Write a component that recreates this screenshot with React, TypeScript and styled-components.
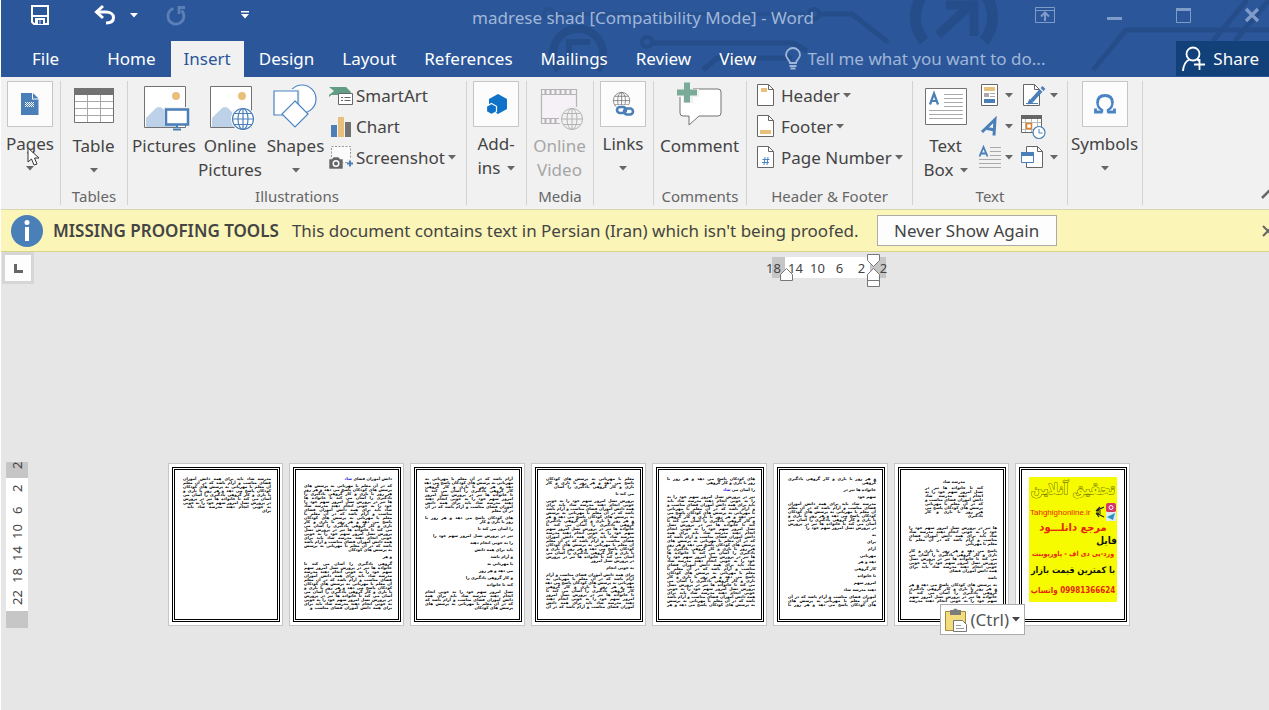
import React from "react";
import styled, { createGlobalStyle, css } from "styled-components";

const GlobalStyle = createGlobalStyle`
  * { box-sizing: border-box; }
  body {
    margin: 0;
    background: #e6e6e6;
    font-family: "Noto Sans", "Liberation Sans", sans-serif;
    color: #444;
  }
  button, input {
    font: inherit;
    color: inherit;
    background: none;
    border: 0;
    padding: 0;
    margin: 0;
  }
  svg { display: block; flex: none; overflow: visible; }
`;

const Window = styled.div`
  display: flex;
  flex-direction: column;
  min-height: 100vh;
  border-left: 1px solid #fff;
  overflow-x: hidden;
`;

/* ---------- title bar and tabs ---------- */

const Header = styled.header`
  position: relative;
  background: #2b579a;
  color: #fff;
`;

const Circuit = styled.svg`
  position: absolute;
  top: 0;
  right: 0;
  overflow: hidden;
`;

const TitleBar = styled.div`
  position: relative;
  display: flex;
  height: 41px;
  align-items: flex-start;
`;

const QuickAccess = styled.div`
  display: flex;
  width: 260px;
  padding: 4px 0 0 29px;
`;

const QuickButton = styled.button<{ $after: number }>`
  display: flex;
  align-items: center;
  height: 22px;
  margin-right: ${(p) => p.$after}px;
`;

const Title = styled.h1`
  flex: 1;
  margin: 0;
  padding-top: 6px;
  font-size: 17px;
  line-height: 24px;
  font-weight: 400;
  text-align: center;
  white-space: nowrap;
  color: #a0b6d8;
`;

const WindowControls = styled.div`
  display: flex;
  gap: 49px;
  padding: 4px 7px 0 10px;
`;

const ControlButton = styled.button`
  display: flex;
  align-items: center;
  justify-content: center;
  width: 20px;
  height: 22px;
`;

const TabRow = styled.nav`
  position: relative;
  display: flex;
  gap: 2px;
  height: 36px;
`;

const Tab = styled.button<{ $active?: boolean; $file?: boolean }>`
  padding: 0 ${(p) => (p.$file ? 31 : 13)}px;
  margin-right: ${(p) => (p.$file ? 2 : 0)}px;
  font-size: 17px;
  line-height: 36px;
  white-space: nowrap;
  ${(p) =>
    p.$active &&
    css`
      background: #f1f1f1;
      color: #2b579a;
    `}
`;

const TellMe = styled.label`
  display: flex;
  flex: 1;
  align-items: center;
  gap: 6px;
  padding-left: 14px;
`;

const TellMeInput = styled.input`
  width: 260px;
  font-size: 17px;
  line-height: 24px;
  outline: none;
  &::placeholder {
    color: #a0b6d8;
    opacity: 1;
  }
`;

const ShareButton = styled.button`
  display: flex;
  align-items: center;
  gap: 8px;
  height: 35px;
  padding: 0 10px 0 6px;
  background: #124078;
  font-size: 17px;
`;

/* ---------- ribbon ---------- */

const Ribbon = styled.div`
  position: relative;
  display: flex;
  height: 132px;
  padding: 4px 0;
  background: #f1f1f1;
`;

const Group = styled.section<{ $width: number }>`
  display: flex;
  flex: none;
  flex-direction: column;
  width: ${(p) => p.$width}px;
  border-right: 1px solid #d2d2d2;
`;

const GroupBody = styled.div<{ $pad?: number }>`
  display: flex;
  flex: 1;
  padding-left: ${(p) => p.$pad ?? 0}px;
`;

const GroupLabel = styled.div`
  height: 18px;
  font-size: 15px;
  line-height: 18px;
  text-align: center;
  white-space: nowrap;
  color: #666;
`;

const BigButton = styled.button<{ $width?: number; $muted?: boolean }>`
  display: flex;
  flex-direction: column;
  align-items: center;
  width: ${(p) => (p.$width ? p.$width + "px" : "100%")};
  padding-right: 1px;
  font-size: 17px;
  line-height: 24px;
  color: ${(p) => (p.$muted ? "#a6a6a6" : "#444")};
`;

const IconArea = styled.span<{ $boxed?: boolean }>`
  display: flex;
  justify-content: center;
  width: 46px;
  height: 46px;
  margin-bottom: ${(p) => (p.$boxed ? 5 : 7)}px;
  ${(p) =>
    p.$boxed &&
    css`
      align-items: center;
      background: #fcfcfc;
      border: 1px solid #c6c6c6;
    `}
`;

const Line = styled.span`
  display: flex;
  align-items: center;
  justify-content: center;
  gap: 6px;
  height: 24px;
  white-space: nowrap;
`;

const SmallColumn = styled.div<{ $pad?: number }>`
  display: flex;
  flex-direction: column;
  padding-left: ${(p) => p.$pad ?? 0}px;
`;

const SmallButton = styled.button<{ $gap?: number }>`
  display: flex;
  align-items: center;
  gap: 3px;
  height: 31px;
  padding-bottom: 2px;
  font-size: 17px;
  white-space: nowrap;
  & > svg:first-child { margin-right: ${(p) => p.$gap ?? 0}px; }
`;

const CollapseButton = styled.button`
  display: flex;
  align-items: flex-end;
  margin-left: auto;
  overflow: hidden;
`;

const Pointer = styled.svg`
  position: absolute;
  left: 26px;
  top: 70px;
`;

/* ---------- message bar ---------- */

const MessageBar = styled.div`
  display: flex;
  align-items: center;
  height: 43px;
  padding-left: 10px;
  font-size: 17px;
  white-space: nowrap;
  background: #fbf5b7;
  border-top: 1px solid #d8d6b0;
  border-bottom: 1px solid #d8d48a;
`;

const MessageTitle = styled.strong`
  margin: 0 13px 0 10px;
  font-weight: 600;
`;

const MessageButton = styled.button`
  height: 31px;
  width: 180px;
  margin-left: 18px;
  background: #fdfdfd;
  border: 1px solid #ababab;
`;

const CloseButton = styled.button`
  margin-left: auto;
  overflow: hidden;
`;

/* ---------- document area ---------- */

const Workspace = styled.main`
  display: grid;
  grid-template-columns: 33px 1fr;
  grid-template-rows: 34px 1fr;
  flex: 1;
`;

const TabSelector = styled.button`
  display: flex;
  align-items: center;
  justify-content: center;
  width: 32px;
  height: 32px;
  margin: 0 1px;
  background: #fdfdfd;
  border: 3px solid #d6d6d6;
`;

const TopRulerRow = styled.div`
  display: flex;
  justify-content: center;
  padding: 5px 5px 0 359px;
`;

const TopRuler = styled.div`
  position: relative;
  display: flex;
  height: 21px;
  font-size: 13px;
  line-height: 22px;
  background: linear-gradient(
    90deg,
    transparent 9px, #c6c6c6 9px 22px, #fff 22px 107px, #c6c6c6 107px 123px, transparent 123px
  );
`;

const TopMark = styled.span`
  width: 22px;
  text-align: center;
`;

const Indents = styled.svg`
  position: absolute;
  left: 0;
  top: -4px;
`;

const SideRuler = styled.div`
  align-self: start;
  display: flex;
  flex-direction: column;
  width: 22px;
  height: 166px;
  margin: 176px 0 0 5px;
  font-size: 13px;
  line-height: 22px;
  background: linear-gradient(#c6c6c6 16px, #fff 16px 149px, #c6c6c6 149px);
`;

const SideMark = styled.span<{ $first?: boolean }>`
  height: ${(p) => (p.$first ? 15 : 22)}px;
  writing-mode: vertical-rl;
  transform: rotate(180deg);
  text-align: ${(p) => (p.$first ? "right" : "center")};
`;

const Pages = styled.div`
  position: relative;
  display: flex;
  justify-content: center;
  align-items: flex-start;
  gap: 6px;
  padding: 177px 5px 0 0;
`;

const Sheet = styled.article`
  flex: none;
  width: 115px;
  height: 163px;
  padding: 3px 2px 3px 3px;
  background: #fff;
  border: 1px solid #c6c6c6;
`;

const Frame = styled.div`
  display: flex;
  flex-direction: column;
  height: 155px;
  padding: 7px 6px 0 7px;
  border: 3px double #000;
`;

const TextLine = styled.div<{ $width: number; $gap: number; $inset: number }>`
  width: ${(p) => p.$width}px;
  margin: ${(p) => p.$gap}px ${(p) => p.$inset}px 0 auto;
  direction: rtl;
  font-family: "DejaVu Sans", sans-serif;
  font-weight: 700;
  font-size: 4px;
  line-height: 4px;
  white-space: nowrap;
  text-align: justify;
  text-align-last: ${(p) => (p.$width > 56 ? "justify" : "start")};
  color: #000;
`;

const Heading = styled.b`
  color: #2a10d8;
`;

const Poster = styled.div`
  display: flex;
  flex-direction: column;
  width: 88px;
  height: 125px;
  direction: rtl;
  background: #f7fb00;
  font-family: "DejaVu Sans Condensed", "DejaVu Sans", sans-serif;
  font-weight: 700;
  white-space: nowrap;
  text-align: center;
`;

const PosterLine = styled.div<{ $size: number; $height: number; $color?: string; $align?: string }>`
  font-size: ${(p) => p.$size}px;
  height: ${(p) => p.$height}px;
  line-height: ${(p) => p.$height}px;
  color: ${(p) => p.$color ?? "#e8260c"};
  text-align: ${(p) => p.$align ?? "center"};
`;

const PosterTitle = styled(PosterLine)`
  color: #f7fb00;
  -webkit-text-stroke: 1px #6f7400;
  paint-order: stroke fill;
`;

const PosterSite = styled.div`
  display: flex;
  align-items: center;
  justify-content: space-between;
  height: 20px;
  padding: 0 1px;
  direction: ltr;
  color: #e8260c;
  font-family: "Liberation Sans", sans-serif;
  font-weight: 400;
  font-size: 8px;
`;

const PasteOptions = styled.button`
  position: absolute;
  left: 50%;
  top: 318px;
  display: flex;
  align-items: center;
  gap: 3px;
  width: 85px;
  height: 31px;
  margin-left: 288px;
  padding-left: 4px;
  background: #fff;
  border: 1px solid #ababab;
  font-size: 17px;
  color: #555;
`;

/* ---------- icons ---------- */

const Caret = ({ color = "#666" }: { color?: string }) => (
  <svg width="8" height="5" viewBox="0 0 8 5"><path d="M0 0h8L4 4.5z" fill={color} /></svg>
);

const SaveIcon = () => (
  <svg width="20" height="20" viewBox="0 0 20 20" fill="none" stroke="#fff" strokeWidth="2">
    <path d="M2 1h16v18H4l-2-2zM2 11h16" />
    <path d="M5 13h10v7H5z" fill="#fff" stroke="none" />
    <path d="M8 15h1.6v4H8zM10.4 15H13v4h-2.6z" fill="#2b579a" stroke="none" />
  </svg>
);
const UndoIcon = () => (
  <svg width="22" height="20" viewBox="0 0 22 20" fill="none" stroke="#fff" strokeWidth="3">
    <path d="M2 7h10c4 0 7.500 2 7.500 5.500S17 18 12 18" /><path d="M9 1L2.500 7 9 13" />
  </svg>
);
const RedoIcon = () => (
  <svg width="20" height="20" viewBox="1 0 20 20" fill="none" stroke="#5c7fb6" strokeWidth="2.800">
    <path d="M7.500 3.500A8 8 0 1 0 15.500 5.500" /><path d="M13 9V2.500H19" />
  </svg>
);
const CustomizeIcon = () => (
  <svg width="8" height="8" viewBox="0 0 8 8" fill="#fff"><path d="M0 0h8v1.500H0zM0 3h8L4 7.500z" /></svg>
);
const RibbonOptionsIcon = () => (
  <svg width="20" height="16" viewBox="0 0 20 16" fill="none" stroke="#7f9bc8">
    <path d="M.5.5h19v15H.5zM.5 3.500h19" /><path d="M10 14V6M6 9.500l4-4 4 4" strokeWidth="2" />
  </svg>
);
const MinimizeIcon = () => (
  <svg width="15" height="10" viewBox="0 0 15 10"><path d="M0 7h15v3H0z" fill="#7f9bc8" /></svg>
);
const MaximizeIcon = () => (
  <svg width="15" height="15" viewBox="0 0 15 15"><path d="M.5.5h14v14H.5z" fill="none" stroke="#7f9bc8" /><path d="M0 0h15v3H0z" fill="#7f9bc8" /></svg>
);
const CloseIcon = () => (
  <svg width="14" height="14" viewBox="0 0 14 14"><path d="M1 1l12 12M13 1L1 13" stroke="#7f9bc8" strokeWidth="3.200" /></svg>
);
const BulbIcon = () => (
  <svg width="16" height="22" viewBox="0 0 16 22" fill="none" stroke="#a0b6d8" strokeWidth="1.800">
    <path d="M5 15c0-3-4-4.500-4-8a7 7 0 0 1 14 0c0 3.500-4 5-4 8z" /><path d="M4.500 18h7M5.500 20.500h5" strokeWidth="2" />
  </svg>
);
const ShareIcon = () => (
  <svg width="23" height="25" viewBox="0 0 23 25" fill="none" stroke="#fff" strokeWidth="1.800">
    <circle cx="11" cy="8" r="6.500" /><path d="M1 25c.5-7 3-10 6.500-11.500M15 13l2 2M17.500 13v11M12 18.500h11" />
  </svg>
);

const PagesIcon = () => (
  <svg width="18" height="22" viewBox="0 0 18 22">
    <path d="M0 0h11v6.500h6.500V22H0z" fill="#4a7fb8" /><path d="M12 0l5.500 5.500H12z" fill="#4a7fb8" />
    <path d="M4 9.500h9M4 11.500h9M4 13.500h9" stroke="#fff" strokeDasharray="1 1" />
    <path d="M5 10.500h8M5 12.500h8" stroke="#fff" strokeDasharray="1 1" />
  </svg>
);
const TableIcon = () => (
  <svg width="40" height="44" viewBox="0 1 40 44">
    <path d="M.5 8.500h39v34H.5z" fill="#fff" stroke="#727272" />
    <path d="M0 8h40v7H0z" fill="#727272" />
    <path d="M13.500 15v27M26.500 15v27M1 21.500h38M1 28.500h38M1 35.500h38" stroke="#a8a8a8" />
  </svg>
);
const Photo = () => (
  <>
    <path d="M.5.5h41v41H.5z" fill="#fff" stroke="#727272" />
    <circle cx="32" cy="10" r="4" fill="#e9bf7c" />
    <path d="M2 32l10-10q3-2 6 0l14 14v5H2z" fill="#bdd1e8" />
  </>
);
const GlobeLines = () => (
  <>
    <circle cx="11" cy="11" r="10.500" /><ellipse cx="11" cy="11" rx="5" ry="10.500" />
    <path d="M11 .5v21M.5 11h21M2.500 5.500h17M2.500 16.500h17" />
  </>
);
const PicturesIcon = () => (
  <svg width="46" height="46" viewBox="-3 -5 46 46">
    <Photo />
    <path d="M20 21h26v18H20z" fill="#f1f1f1" />
    <path d="M22 23.500h22v15H22z" fill="#fff" stroke="#4a7fb8" strokeWidth="2.500" />
    <path d="M33 39v3M29 43.500h8" stroke="#4a7fb8" strokeWidth="2" />
  </svg>
);
const OnlinePicturesIcon = () => (
  <svg width="46" height="46" viewBox="-3 -5 46 46">
    <Photo />
    <g transform="translate(22 22)" fill="none" stroke="#4a7fb8" strokeWidth="1.200"><circle cx="11" cy="11" r="12" stroke="none" fill="#fff" /><GlobeLines /></g>
  </svg>
);
const ShapesIcon = () => (
  <svg width="44" height="46" viewBox="1 4 44 46" fill="#fff" stroke="#4a84c4" strokeWidth="1.200">
    <circle cx="29" cy="22" r="14" /><path d="M1 14h24v24H1z" stroke="#f1f1f1" strokeWidth="4" /><path d="M1 14h24v24H1z" />
    <path d="M22 24l13 13L22 50 9 37z" />
  </svg>
);
const SmartArtIcon = () => (
  <svg width="24" height="20" viewBox="0 0 24 20">
    <path d="M0 1h17l5 5-2 3H0l5-4z" fill="#5f9d85" /><path d="M0 11V9l6-3" fill="#5f9d85" />
    <path d="M9.500 7.500h14v11h-14z" fill="#fff" stroke="#666" />
    <path d="M12 11.500h2m1.500 0h6M12 14.500h2m1.500 0h6" stroke="#666" />
  </svg>
);
const ChartIcon = () => (
  <svg width="24" height="22" viewBox="0 0 24 22">
    <path d="M2 9h6v12H2z" fill="#4a7fb8" /><path d="M9 1h6v20H9z" fill="#e9bf7c" /><path d="M16 6h6v15h-6z" fill="#727272" />
  </svg>
);
const ScreenshotIcon = () => (
  <svg width="24" height="25" viewBox="0 0 24 25">
    <path d="M2.500 1.500h19v16h-19z" fill="#fbfbfb" stroke="#999" strokeDasharray="2 1.500" />
    <path d="M0 14h3l1.500-2h5L11 14h3v10H0z" fill="#666" stroke="#f1f1f1" strokeWidth=".6" />
    <circle cx="7" cy="18.500" r="2.800" fill="none" stroke="#fff" strokeWidth="1.400" />
    <path d="M18 14h7v9h-7z" fill="#f1f1f1" />
    <path d="M21 15.500v6M18 18.500h6" stroke="#4a7fb8" strokeWidth="2" />
  </svg>
);
const AddInsIcon = () => (
  <svg width="22" height="22" viewBox="-1 0 22 22" fill="#0f72c8">
    <path d="M12 1l9 5v10l-9 5-9-5V6z" /><path d="M5.500 10.500l5 2.800v5.400l-5 2.800-5-2.800v-5.400z" stroke="#fcfcfc" strokeWidth="1.200" />
  </svg>
);
const VideoIcon = () => (
  <svg width="44" height="46" viewBox="-2 0 44 46" fill="none" stroke="#b4b4b4">
    <path d="M1.500 8.500h35v34h-35z" fill="#f6f1f6" strokeWidth="1.200" /><path d="M1 13.500h36M1 37.500h36" />
    <path d="M5.500 9v4M10.500 9v4M15.500 9v4M20.500 9v4M25.500 9v4M30.500 9v4M5.500 38v4M10.500 38v4M15.500 38v4" strokeWidth="2" />
    <g transform="translate(21 27)"><circle cx="11" cy="11" r="13" fill="#f1f1f1" stroke="none" /><GlobeLines /></g>
  </svg>
);
const LinksIcon = () => (
  <svg width="24" height="26" viewBox="0 0 24 26" fill="none" stroke="#727272">
    <g transform="translate(2 1) scale(.78)"><GlobeLines /></g>
    <path d="M5 14h20v12H8z" fill="#fcfcfc" stroke="none" />
    <rect x="6" y="16" width="9" height="6" rx="3" stroke="#4a7fb8" strokeWidth="2.600" />
    <rect x="13" y="17.500" width="9" height="6" rx="3" stroke="#4a7fb8" strokeWidth="2.600" />
  </svg>
);
const CommentIcon = () => (
  <svg width="46" height="46" viewBox="0 0 46 46">
    <path d="M7 8h34q3 0 3 3v21q0 3-3 3H22l-10 9v-9H6q-3 0-3-3V11q0-3 4-3z" fill="#fff" stroke="#727272" />
    <path d="M6 0h10v8h6v8h-6v6H6v-6H-1V8h7z" fill="#f1f1f1" />
    <path d="M7 1.500h6v7h7v6h-7v7H7v-7H0v-6h7z" fill="#7aab98" />
  </svg>
);
const Doc = ({ children }: { children?: React.ReactNode }) => (
  <svg width="18" height="23" viewBox="0 0 18 23">
    <path d="M.5.5h11l5 5v16H.5z" fill="#fff" stroke="#666" /><path d="M11.500.5v5h5" fill="none" stroke="#666" />
    {children}
  </svg>
);
const TextBoxIcon = () => (
  <svg width="42" height="44" viewBox="0 0 42 44">
    <path d="M.5 7.500h41v36H.5z" fill="#fff" stroke="#727272" />
    <path d="M5 19.500l4-11 4 11M7 16h5" transform="translate(0 4)" fill="none" stroke="#4a7fb8" strokeWidth="2.200" />
    <path d="M19 13.500h19M19 17.500h19M19 21.500h19M19 25.500h19M4 29.500h34M4 33.500h34M4 37.500h34" stroke="#aaa" />
  </svg>
);
const QuickPartsIcon = () => (
  <svg width="23" height="23" viewBox="0 0 23 23">
    <path d="M2.500.5h16v21h-16z" fill="#fff" stroke="#666" /><path d="M5 3h11v4H5z" fill="#e9bf7c" />
    <path d="M5 9h5v4H5z" fill="#aaa" /><path d="M11 9.500h5M11 12.500h5" stroke="#aaa" /><path d="M5 15h11v4H5z" fill="#4a7fb8" />
  </svg>
);
const SignatureIcon = () => (
  <svg width="25" height="23" viewBox="-2 0 25 23">
    <path d="M.5.5h11l5 5v16H.5z" fill="#fff" stroke="#666" /><path d="M11.500.5v5h5" fill="none" stroke="#666" />
    <path d="M8.500 17L18 6.500M19 5.500l2-2" stroke="#4a7fb8" strokeWidth="4" /><path d="M5 20l1.500-4.500 3 3zM3 19.500h12" fill="#4a7fb8" stroke="#4a7fb8" />
  </svg>
);
const WordArtIcon = () => (
  <svg width="23" height="20" viewBox="-2 0 23 20" fill="none" stroke="#4a7fb8" strokeWidth="3">
    <path d="M1 15L14 2.500l-1 16M6 11.500l8 1.500" />
  </svg>
);
const DateIcon = () => (
  <svg width="25" height="24" viewBox="0 0 25 24">
    <path d="M.5.5h20v17H.5z" fill="#fff" stroke="#666" /><path d="M0 0h21v4H0z" fill="#666" />
    <path d="M4.500 4v13M16.500 4v13M10.500 4v13M1 7.500h19M1 14.500h19" stroke="#bbb" />
    <path d="M5.500 8.500h5v5h-5z" fill="#fff" stroke="#d9822b" strokeWidth="1.500" />
    <circle cx="18" cy="17.500" r="6" fill="#fff" stroke="#4a7fb8" strokeWidth="1.200" /><path d="M18 14v4h3.500" fill="none" stroke="#4a7fb8" />
  </svg>
);
const DropCapIcon = () => (
  <svg width="23" height="23" viewBox="0 0 23 23" fill="none">
    <path d="M.5 10.500L4.500 1l4 9.500M2 7.500h5" stroke="#4a7fb8" strokeWidth="1.800" />
    <path d="M11 1.500h11M11 5.500h11M11 9.500h11M0 13.500h22M0 17.500h22M0 21.500h22" stroke="#aaa" />
  </svg>
);
const ObjectIcon = () => (
  <svg width="25" height="23" viewBox="0 0 25 23">
    <path d="M5.500.5h11l5 5v16h-16z" fill="#fff" stroke="#666" /><path d="M16.500.5v5h5" fill="none" stroke="#666" />
    <path d="M.5 7.500h12v9H.5z" fill="#fff" stroke="#4a7fb8" /><path d="M0 6h13v4H0z" fill="#4a7fb8" />
  </svg>
);
const OmegaIcon = () => (
  <svg width="22" height="20" viewBox="0 0 22 20" fill="none" stroke="#4a84c4">
    <path d="M8 18.500V16C5 14.500 3.500 12 3.500 8.500M18.500 8.500c0 3.500-1.500 6-4.500 7.500v2.500" strokeWidth="2.400" />
    <path d="M3.500 9C3.500 4 6.500 1.500 11 1.500S18.500 4 18.500 9" strokeWidth="2.800" />
    <path d="M1.500 14.500v3.500h7M20.500 14.500v3.500h-7" strokeWidth="2.800" />
  </svg>
);
const InfoIcon = () => (
  <svg width="32" height="32" viewBox="0 0 32 32">
    <circle cx="16" cy="16" r="16" fill="#4a7fb8" /><circle cx="16" cy="7.500" r="2.500" fill="#fff" /><path d="M14 12h4v14h-4z" fill="#fff" />
  </svg>
);
const ClipboardIcon = () => (
  <svg width="23" height="24" viewBox="0 0 23 24">
    <path d="M.5 3.500h20v19H.5z" fill="#f3dc7c" stroke="#a58a3c" />
    <path d="M5 2h3q2-3 5 0h3v5H5z" fill="#7c7c7c" /><path d="M8.500 12.500h9l4 4v7h-13z" fill="#fff" stroke="#777" />
    <path d="M11 17.500h5M11 20.500h8" stroke="#999" />
  </svg>
);

/* ---------- thumbnail contents ---------- */

const WORDS =
  "مدرسه شاد باید برای همه دانش آموزان فضای مناسب و آرام باشد که در آن معلم با مهربانی به پرسش های کودکان پاسخ می دهد و هر روز با بازی و کار گروهی یادگیری را آسان می کند تا خانواده ها نیز در پرورش نسل امروز سهم خود را به خوبی انجام دهند".split(" ");

function wordsFor(width: number, start: number) {
  const out: string[] = [];
  let used = 0;
  for (let i = start; ; i++) {
    const w = WORDS[i % WORDS.length];
    const size = w.length * 2.4 + 1.7;
    if (out.length > 0 && used + size > width) break;
    out.push(w);
    used += size;
  }
  return out.join(" ");
}

type Row = { width: number; gap?: number; inset?: number; heading?: string };

const full = (count: number, last = 88, gap = 0): Row[] =>
  Array.from({ length: count }, (_, i) => ({ width: i === count - 1 ? last : 88, gap: i === 0 ? gap : 0 }));

const PAGES: Row[][] = [
  [...full(8, 84), { width: 6 }],
  [{ width: 40, heading: "شاد" }, ...full(16, 88, 3), { width: 52 }, { width: 18, gap: 3 }, ...full(12, 82, 3)],
  [
    ...full(8), { width: 30 }, { width: 88, gap: 3 }, { width: 40 }, { width: 52, gap: 3 }, { width: 80, gap: 3 },
    { width: 54, gap: 3 }, { width: 52, gap: 3 }, { width: 28, gap: 3 }, { width: 36, gap: 3 }, { width: 40, gap: 3 },
    { width: 54, gap: 3 }, { width: 38, gap: 3 }, ...full(5, 40, 3),
  ],
  [...full(3, 80), { width: 24, gap: 3 }, ...full(15, 88, 3), { width: 46 }, { width: 38, gap: 3 }, ...full(9, 88, 3)],
  [...full(1), { width: 56 }, { width: 28, gap: 3, heading: "شاد" }, ...full(28, 88, 3)],
  [
    ...full(1), { width: 22 }, { width: 54, gap: 3 }, { width: 18, gap: 3 }, ...full(7, 70, 3), { width: 14, gap: 3 },
    { width: 14, gap: 3 }, { width: 14, gap: 3 }, { width: 14, gap: 3 }, { width: 20, gap: 2 }, { width: 24, gap: 3 },
    { width: 26, gap: 3 }, { width: 24, gap: 3 }, { width: 40, gap: 3 }, ...full(3, 88, 3),
  ],
  [
    { width: 24, inset: 32, gap: 3 },
    ...Array.from({ length: 7 }, (_, i) => ({ width: 58, inset: 14, gap: i ? 0 : 2 })), { width: 10, inset: 14 },
    ...full(5, 42, 8), ...full(6, 56, 3), { width: 14, gap: 3 }, ...full(5, 88, 3),
  ],
];

const Thumbnail = ({ rows, seed }: { rows: Row[]; seed: number }) => (
  <Sheet>
    <Frame>
      {rows.map((row, i) => (
        <TextLine key={i} $width={row.width} $gap={row.gap ?? 0} $inset={row.inset ?? 0}>
          {wordsFor(row.width, seed === 6 && i === 0 ? 0 : seed * 5 + i * 7)} {row.heading && <Heading>{row.heading}</Heading>}
        </TextLine>
      ))}
    </Frame>
  </Sheet>
);

const TABS = ["Home", "Insert", "Design", "Layout", "References", "Mailings", "Review", "View"];

export default function App() {
  return (
    <Window>
      <GlobalStyle />
      <Header>
        <Circuit width="740" height="77" viewBox="529 0 740 77" fill="none" stroke="#244d89" strokeWidth="5" aria-hidden="true">
          <g strokeWidth="8"><path d="M559 70a25 25 0 1 1 38 0" /><path d="M566 42h24M569 40v20h14" strokeWidth="6" /></g>
          <circle cx="549" cy="14" r="5" stroke="#28528f" strokeWidth="4" /><path d="M555 14h250" stroke="#28528f" strokeWidth="4" />
          <circle cx="647" cy="42" r="5" strokeWidth="4" /><path d="M653 43h140l14 8M703 70l14-12h75" />
          <circle cx="814" cy="14" r="5" strokeWidth="4" /><path d="M820 14h32l36 28" />
          <path d="M924 41a38 38 0 0 1 4-52M984 41a38 38 0 0 0-4-52" strokeWidth="11" />
          <path d="M938 35l36-33M946 5h28v31" strokeWidth="9" />
          <path d="M1093 70l33-40h143M1213 41l34-41M1235 41l34-41" />
        </Circuit>
        <TitleBar>
          <QuickAccess>
            <QuickButton $after={44} aria-label="Save"><SaveIcon /></QuickButton>
            <QuickButton $after={14} aria-label="Undo"><UndoIcon /></QuickButton>
            <QuickButton $after={29} aria-label="Undo history"><Caret color="#fff" /></QuickButton>
            <QuickButton $after={54} aria-label="Repeat"><RedoIcon /></QuickButton>
            <QuickButton $after={0} aria-label="Customize toolbar"><CustomizeIcon /></QuickButton>
          </QuickAccess>
          <Title>madrese shad [Compatibility Mode] - Word</Title>
          <WindowControls>
            <ControlButton aria-label="Ribbon display options"><RibbonOptionsIcon /></ControlButton>
            <ControlButton aria-label="Minimize"><MinimizeIcon /></ControlButton>
            <ControlButton aria-label="Maximize"><MaximizeIcon /></ControlButton>
            <ControlButton aria-label="Close"><CloseIcon /></ControlButton>
          </WindowControls>
        </TitleBar>
        <TabRow>
          <Tab $file>File</Tab>
          {TABS.map((name) => <Tab key={name} $active={name === "Insert"}>{name}</Tab>)}
          <TellMe>
            <BulbIcon />
            <TellMeInput aria-label="Tell me what you want to do" placeholder="Tell me what you want to do..." />
          </TellMe>
          <ShareButton><ShareIcon />Share</ShareButton>
        </TabRow>
      </Header>

      <Ribbon>
        <Group $width={60}>
          <BigButton><IconArea $boxed><PagesIcon /></IconArea><Line>Pages</Line><Line><Caret /></Line></BigButton>
        </Group>
        <Group $width={67}>
          <GroupBody>
            <BigButton><IconArea><TableIcon /></IconArea><Line>Table</Line><Line><Caret /></Line></BigButton>
          </GroupBody>
          <GroupLabel>Tables</GroupLabel>
        </Group>
        <Group $width={339}>
          <GroupBody $pad={4}>
            <BigButton $width={65}><IconArea><PicturesIcon /></IconArea><Line>Pictures</Line></BigButton>
            <BigButton $width={67}><IconArea><OnlinePicturesIcon /></IconArea><Line>Online</Line><Line>Pictures</Line></BigButton>
            <BigButton $width={64}><IconArea><ShapesIcon /></IconArea><Line>Shapes</Line><Line><Caret /></Line></BigButton>
            <SmallColumn $pad={1}>
              <SmallButton><SmartArtIcon />SmartArt</SmallButton>
              <SmallButton><ChartIcon />Chart</SmallButton>
              <SmallButton><ScreenshotIcon />Screenshot<Caret /></SmallButton>
            </SmallColumn>
          </GroupBody>
          <GroupLabel>Illustrations</GroupLabel>
        </Group>
        <Group $width={60}>
          <BigButton><IconArea $boxed><AddInsIcon /></IconArea><Line>Add-</Line><Line>ins<Caret /></Line></BigButton>
        </Group>
        <Group $width={67}>
          <GroupBody>
            <BigButton $muted disabled><IconArea><VideoIcon /></IconArea><Line>Online</Line><Line>Video</Line></BigButton>
          </GroupBody>
          <GroupLabel>Media</GroupLabel>
        </Group>
        <Group $width={60}>
          <BigButton><IconArea $boxed><LinksIcon /></IconArea><Line>Links</Line><Line><Caret /></Line></BigButton>
        </Group>
        <Group $width={93}>
          <GroupBody>
            <BigButton><IconArea><CommentIcon /></IconArea><Line>Comment</Line></BigButton>
          </GroupBody>
          <GroupLabel>Comments</GroupLabel>
        </Group>
        <Group $width={166}>
          <GroupBody>
            <SmallColumn $pad={10}>
              <SmallButton $gap={3}><Doc><path d="M4 4h6v4H4z" fill="#e9bf7c" /></Doc>Header<Caret /></SmallButton>
              <SmallButton $gap={3}><Doc><path d="M3 15h11v4H3z" fill="#e9bf7c" /></Doc>Footer<Caret /></SmallButton>
              <SmallButton $gap={3}><Doc><path d="M8 11l-1 8M11 11l-1 8M5.500 13.500h7M5 16.500h7" stroke="#4a84c4" fill="none" /></Doc>Page Number<Caret /></SmallButton>
            </SmallColumn>
          </GroupBody>
          <GroupLabel>Header &amp; Footer</GroupLabel>
        </Group>
        <Group $width={155}>
          <GroupBody>
            <BigButton $width={66}><IconArea><TextBoxIcon /></IconArea><Line>Text</Line><Line>Box<Caret /></Line></BigButton>
            <SmallColumn>
              <SmallButton aria-label="Quick Parts"><QuickPartsIcon /><Caret /></SmallButton>
              <SmallButton aria-label="WordArt"><WordArtIcon /><Caret /></SmallButton>
              <SmallButton aria-label="Drop Cap"><DropCapIcon /><Caret /></SmallButton>
            </SmallColumn>
            <SmallColumn $pad={8}>
              <SmallButton $gap={1} aria-label="Signature Line"><SignatureIcon /><Caret /></SmallButton>
              <SmallButton aria-label="Date and Time"><DateIcon /></SmallButton>
              <SmallButton $gap={1} aria-label="Object"><ObjectIcon /><Caret /></SmallButton>
            </SmallColumn>
          </GroupBody>
          <GroupLabel>Text</GroupLabel>
        </Group>
        <Group $width={75}>
          <BigButton><IconArea $boxed><OmegaIcon /></IconArea><Line>Symbols</Line><Line><Caret /></Line></BigButton>
        </Group>
        <CollapseButton aria-label="Collapse the ribbon">
          <svg width="8" height="16" viewBox="0 0 8 16"><path d="M1 9l8-8" fill="none" stroke="#666" strokeWidth="2.500" /></svg>
        </CollapseButton>
        <Pointer width="14" height="20" viewBox="0 0 14 20" aria-hidden="true">
          <path d="M1 1v14l3.500-3 2.500 6 3-1-2.500-6H12z" fill="#fff" stroke="#333" />
        </Pointer>
      </Ribbon>

      <MessageBar>
        <InfoIcon />
        <MessageTitle>MISSING PROOFING TOOLS</MessageTitle>
        <span>This document contains text in Persian (Iran) which isn't being proofed.</span>
        <MessageButton>Never Show Again</MessageButton>
        <CloseButton aria-label="Dismiss message">
          <svg width="7" height="12" viewBox="0 0 7 12"><path d="M1 1l10 10M1 11L11 1" stroke="#666" strokeWidth="2" /></svg>
        </CloseButton>
      </MessageBar>

      <Workspace>
        <TabSelector aria-label="Tab selector">
          <svg width="9" height="9" viewBox="0 0 9 9"><path d="M0 0h3v6h6v3H0z" fill="#666" /></svg>
        </TabSelector>
        <TopRulerRow>
          <TopRuler>
            {[18, 14, 10, 6, 2, 2].map((n, i) => <TopMark key={i}>{n}</TopMark>)}
            <Indents width="132" height="34" viewBox="0 0 132 34" fill="#fff" stroke="#777" aria-hidden="true">
              <path d="M17.500 27.500v-6l6-6 6 6v6z" />
              <path d="M104.500 1.500h12v6l-6 6-6-6z" />
              <path d="M104.500 33.500v-12l6-6 6 6v12zM104.500 27.500h12" />
            </Indents>
          </TopRuler>
        </TopRulerRow>
        <SideRuler>
          {[2, 2, 6, 10, 14, 18, 22].map((n, i) => <SideMark key={i} $first={i === 0}>{n}</SideMark>)}
        </SideRuler>
        <Pages>
          {PAGES.map((rows, i) => <Thumbnail key={i} rows={rows} seed={i} />)}
          <Sheet>
            <Frame>
              <Poster>
                <PosterTitle $size={15} $height={25}>تحقیق آنلاین</PosterTitle>
                <PosterSite>
                  <span>Tahghighonline.ir</span>
                  <svg width="22" height="18" viewBox="-12 0 22 18">
                    <path d="M-2 4l-8 4M-10 8l4-4M-10 8h5M-2 14l-8-4M-10 10l3 4M-10 10h5" stroke="#222" strokeWidth="1.200" />
                    <rect width="10" height="9" rx="2" fill="#d6336c" /><circle cx="5" cy="4.500" r="2" fill="none" stroke="#fff" />
                    <rect y="9" width="10" height="9" fill="#dcecf5" /><path d="M1 14l8-4-2 7z" fill="#2d8fc4" />
                  </svg>
                </PosterSite>
                <PosterLine $size={11} $height={12}>مرجع دانلـــود</PosterLine>
                <PosterLine $size={10} $height={14} $color="#111" $align="start">فایل</PosterLine>
                <PosterLine $size={7} $height={12}>ورد-پی دی اف - پاورپوینت</PosterLine>
                <PosterLine $size={9} $height={21} $color="#111">با کمترین قیمت بازار</PosterLine>
                <PosterLine $size={8} $height={19}>09981366624 واتساپ</PosterLine>
              </Poster>
            </Frame>
          </Sheet>
          <PasteOptions><ClipboardIcon />(Ctrl)<Caret color="#444" /></PasteOptions>
        </Pages>
      </Workspace>
    </Window>
  );
}
